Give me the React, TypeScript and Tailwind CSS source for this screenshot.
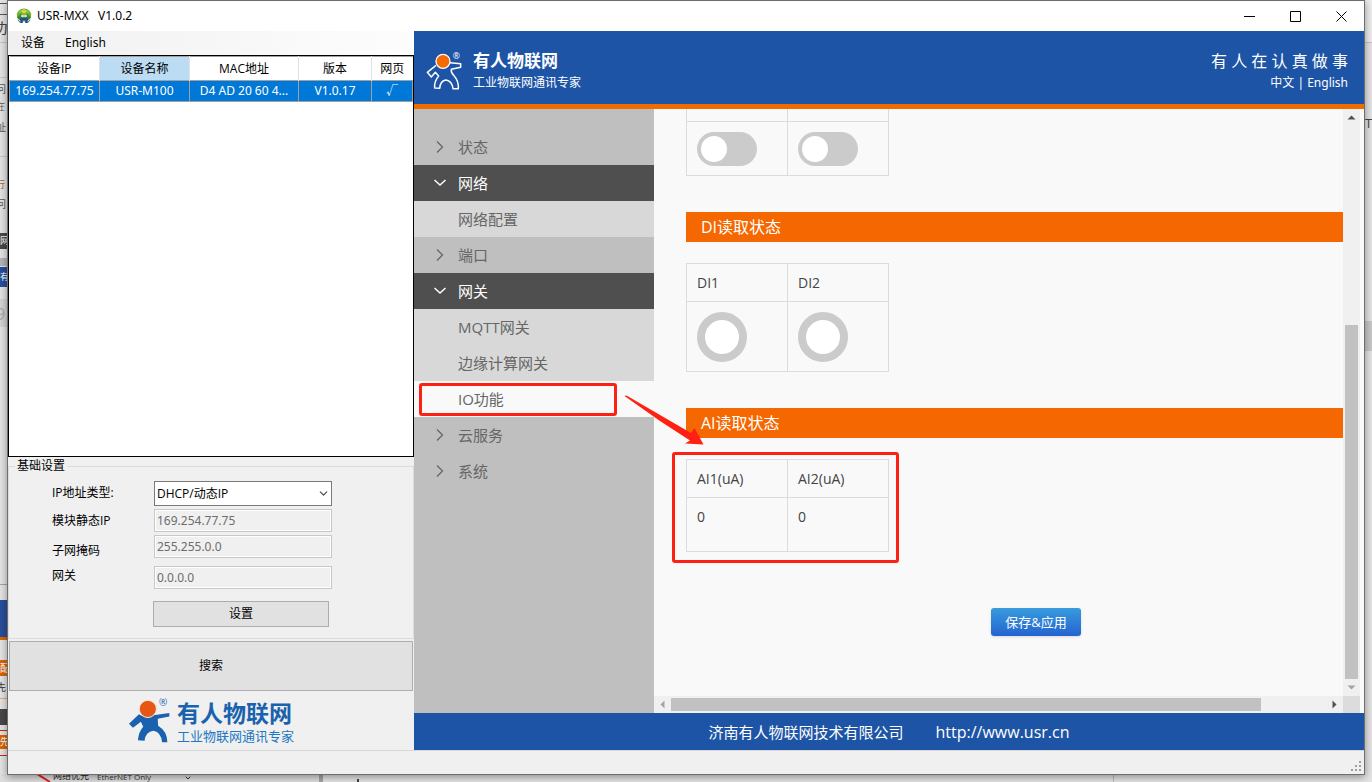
import React from "react";
import { ChevronDown } from "lucide-react";

const stripTexts = [
  { text: "办", cls: "top-[18px] text-[14px] text-[#444]" },
  { text: "问", cls: "top-[79px] text-[10px] text-[#555]" },
  { text: "在", cls: "top-[97px] text-[9px] text-[#555]" },
  { text: "址", cls: "top-[117px] text-[10px] text-[#555]" },
  { text: "行", cls: "top-[175px] text-[9px] text-[#a06a30]" },
  { text: "问", cls: "top-[194px] text-[10px] text-[#555]" },
  { text: "9", cls: "top-[304px] text-[16px] text-[#aaa]" },
  { text: "先", cls: "top-[677px] text-[10px] text-[#333]" },
];

function Backdrop() {
  return (
    <div aria-hidden="true" className="absolute inset-0 overflow-hidden bg-[#e4e4e4] select-none">
      <div className="absolute top-0 left-0 h-full w-2 overflow-hidden">
        <div className="absolute top-[3px] h-px w-full bg-[#55555f]" />
        <div className="absolute top-[14px] h-px w-full bg-[#55555f]" />
        <div className="absolute top-[42px] h-px w-full bg-[#c4c4c4]" />
        <div className="absolute top-[77px] h-px w-full bg-[#c9c9c9]" />
        <div className="absolute top-[156px] h-px w-full bg-[#c9c9c9]" />
        <div className="absolute top-[233px] h-4 w-full overflow-hidden bg-[#484848] text-[9px] leading-4 text-white">网</div>
        <div className="absolute top-[258px] h-2 w-full bg-[#b5b5b5]" />
        <div className="absolute top-[267px] h-5 w-full overflow-hidden bg-[#284f9b] text-[9px] leading-5 text-white">有</div>
        <div className="absolute top-[299px] h-7 w-full bg-[#d4d4d4]" />
        <div className="absolute top-[584px] h-px w-full bg-[#a5a5a5]" />
        <div className="absolute top-[600px] h-[37px] w-full bg-[#284f9b]" />
        <div className="absolute top-[637px] h-[3px] w-full bg-[#dc6500]" />
        <div className="absolute top-[660px] h-4 w-full overflow-hidden bg-[#dc6500] text-[10px] leading-4 text-white">配</div>
        <div className="absolute top-[698px] h-px w-full bg-[#e5a878]" />
        <div className="absolute top-[709px] h-4 w-full bg-[#484848]" />
        <div className="absolute top-[730px] h-px w-full bg-[#dc2018]" />
        <div className="absolute top-[735px] h-[14px] w-full overflow-hidden bg-[#dc6500] text-[9px] leading-[14px] text-white">先</div>
        <div className="absolute top-[755px] h-px w-full bg-[#dc2018]" />
        {stripTexts.map((t, i) => (
          <span key={i} className={`absolute -left-1 leading-5 ${t.cls}`}>{t.text}</span>
        ))}
      </div>
      <div className="absolute top-0 right-0 h-full w-2 overflow-hidden">
        <div className="absolute top-0 h-[42px] w-full bg-[#ededed]" />
        <div className="absolute top-[42px] h-px w-full bg-[#c4c4c4]" />
        <span className="absolute top-[113px] left-[1px] text-[13px] leading-5 text-[#444]">T</span>
        <div className="absolute top-[321px] h-[30px] w-full bg-[#c8c8c8]" />
      </div>
      <div className="absolute bottom-0 left-0 h-2 w-full overflow-hidden">
        <div className="absolute left-0 h-full w-[319px] bg-[#dedede]" />
        <svg className="absolute top-0 left-[36px] h-2 w-5" viewBox="0 0 20 8">
          <path d="M1 0L14 8" stroke="#dc2018" strokeWidth="2" />
        </svg>
        <span className="absolute -top-1 left-[53px] text-[9px] leading-3 text-[#222]">网络优先</span>
        <span className="absolute -top-[3px] left-[97px] text-[8px] leading-3 text-[#333]">EtherNET Only</span>
        <ChevronDown className="absolute top-0 left-[184px] size-2 text-[#333]" strokeWidth={3} />
        <div className="absolute left-[319px] h-full w-1 bg-[#a5a5a5]" />
        <div className="absolute top-[5px] left-[357px] h-[3px] w-[2px] bg-[#444]" />
        <div className="absolute left-[1113px] h-full w-px bg-[#bbb]" />
      </div>
    </div>
  );
}

function AppIcon() {
  return (
    <svg className="size-4" viewBox="0 0 16 16" aria-hidden="true">
      <ellipse cx="8" cy="7" rx="7.2" ry="6.4" fill="#6fb52c" />
      <path d="M2 5Q8-2 14 5L11 4Q8 1 5 4Z" fill="#a6d34c" />
      <circle cx="8" cy="3.8" r="2.2" fill="#d9d63c" />
      <path d="M.8 9.500L4 6.200Q8 4.600 12 6.200L15.200 9.500L13 11.500H3Z" fill="#3f8a2d" />
      <rect x="5" y="6.600" width="6" height="3" rx="1" fill="#c9dfa8" />
      <path d="M4.200 9.600H11.800V15H9.200V12.500H6.800V15H4.200Z" fill="#234f8c" />
      <path d="M2 11.500L4 14.500H5M14 11.500L12 14.500H11" stroke="#3c6e9c" fill="none" />
    </svg>
  );
}

function TitleBar() {
  const button = "flex h-[30px] w-[46px] items-center justify-center";
  return (
    <header className="flex h-[30px] shrink-0 items-center bg-white pl-2">
      <AppIcon />
      <h1 className="ml-[5px] flex-1 font-['Noto_Sans',sans-serif] text-[12px] leading-4 whitespace-pre">USR-MXX   V1.0.2</h1>
      <button className={button} aria-label="Minimize">
        <svg className="size-[11px]" viewBox="0 0 11 11"><path d="M0 5.5H11" stroke="#000" /></svg>
      </button>
      <button className={button} aria-label="Maximize">
        <svg className="size-[11px]" viewBox="0 0 11 11"><path d="M.5 .5H10.500V10.500H.5Z" stroke="#000" fill="none" /></svg>
      </button>
      <button className={button} aria-label="Close">
        <svg className="size-[11px]" viewBox="0 0 11 11"><path d="M.5 .5L10.500 10.500M10.500 .5L.5 10.500" stroke="#000" /></svg>
      </button>
    </header>
  );
}

function DeviceTable() {
  const th = "border-r border-[#e2e2e2] p-0 font-normal last:border-r-0";
  const td = "overflow-hidden border border-[#a0a0a0] px-px py-0 text-center whitespace-nowrap";
  return (
    <div className="min-h-0 flex-1 border border-black bg-white">
      <table className="w-full table-fixed border-collapse text-[12px] leading-4">
        <colgroup>
          <col className="w-[90px]" />
          <col className="w-[90px]" />
          <col className="w-[109px]" />
          <col className="w-[73px]" />
          <col />
        </colgroup>
        <thead>
          <tr className="h-6 border-t border-[#a0a0a0]">
            <th className={th}>设备IP</th>
            <th className={`${th} bg-[#bcdcf4]`}>设备名称</th>
            <th className={th}>MAC地址</th>
            <th className={th}>版本</th>
            <th className={th}>网页</th>
          </tr>
        </thead>
        <tbody>
          <tr className="h-[21px] bg-[#0078d7] font-['Noto_Sans','Noto_Sans_CJK_SC',sans-serif] text-white">
            <td className={td}>169.254.77.75</td>
            <td className={td}>USR-M100</td>
            <td className={td}>D4 AD 20 60 4...</td>
            <td className={td}>V1.0.17</td>
            <td className={td}>√</td>
          </tr>
        </tbody>
      </table>
    </div>
  );
}

function BasicSettings() {
  const input =
    "h-[23px] w-full border border-[#c8c8c8] bg-[#f0f0f0] px-[2px] font-['Noto_Sans',sans-serif] text-[12px] leading-4 text-[#6d6d6d] shadow-[inset_0_0_0_1px_#fff]";
  return (
    <fieldset className="shrink-0 border border-[#dcdcdc] text-[12px]">
      <legend className="ml-[6px] px-[2px] leading-[18px]">基础设置</legend>
      <div className="flex pt-[6px] pb-[11px] pl-[43px]">
        <div className="flex w-[102px] flex-col leading-6">
          <label htmlFor="ip-type">IP地址类型:</label>
          <label htmlFor="static-ip" className="mt-1">模块静态IP</label>
          <label htmlFor="mask" className="mt-[6px]">子网掩码</label>
          <label htmlFor="gateway" className="mt-px">网关</label>
        </div>
        <div className="flex w-[178px] flex-col">
          <div className="relative">
            <select id="ip-type" className="block h-[25px] w-full appearance-none border border-[#7a7a7a] bg-white px-[2px] text-[12px] leading-4">
              <option>DHCP/动态IP</option>
            </select>
            <ChevronDown className="pointer-events-none absolute top-[6px] right-[2px] size-[13px] text-[#444]" strokeWidth={2} />
          </div>
          <input id="static-ip" className={`${input} mt-[3px]`} defaultValue="169.254.77.75" disabled />
          <input id="mask" className={`${input} mt-[3px]`} defaultValue="255.255.0.0" disabled />
          <input id="gateway" className={`${input} mt-2`} defaultValue="0.0.0.0" disabled />
          <button className="mt-3 -ml-px h-[26px] w-[176px] border border-[#adadad] bg-[#e1e1e1] leading-4">设置</button>
        </div>
      </div>
    </fieldset>
  );
}

function BrandLogo() {
  return (
    <div className="flex h-[59px] shrink-0 items-center justify-center gap-[6px] pt-px">
      <svg className="h-[46px] w-[43px]" viewBox="385 205 130 137" aria-hidden="true">
        <path
          d="M418 253L388 282L400 294L424 276L431 291Q417 306 415 332L435 333Q438 306 462 303Q486 308 488 338L504 338Q504 305 476 288L475 267L510 260V249L462 256Q440 268 418 253Z"
          fill="#1a62ae"
        />
        <circle cx="445" cy="237" r="26" fill="#e95513" stroke="#f0f0f0" strokeWidth="3" />
        <text x="491" y="229" textAnchor="middle" fontSize="30" fill="#1a62ae">®</text>
      </svg>
      <div>
        <div className="text-[23px] leading-[30px] font-bold text-[#1a62ae]">有人物联网</div>
        <div className="text-[13px] leading-4 text-[#2277c4]">工业物联网通讯专家</div>
      </div>
    </div>
  );
}

function DevicePanel() {
  return (
    <section className="flex w-[406px] shrink-0 flex-col">
      <nav className="flex h-6 shrink-0 items-center bg-linear-to-r from-[#f0f0f0] to-[#fdfdfd] pl-[13px] font-['Noto_Sans','Noto_Sans_CJK_SC',sans-serif] text-[12px] leading-4">
        <button>设备</button>
        <button className="ml-5">English</button>
      </nav>
      <DeviceTable />
      <BasicSettings />
      <button className="mx-px mt-[2px] h-[50px] shrink-0 border border-[#adadad] bg-[#e1e1e1] text-[12px]">搜索</button>
      <BrandLogo />
    </section>
  );
}

function WebHeader() {
  return (
    <header className="flex h-[78px] shrink-0 items-center justify-between border-b-[5px] border-[#f06c00] bg-[#1d54a6] pr-4 pl-3 text-white">
      <div className="flex items-center gap-[11px] pt-[6px]">
        <svg className="h-[38px] w-9" viewBox="48 152 108 114" aria-hidden="true">
          <path
            d="M78 192L52 213L64 227L76 213L86 224Q72 240 74 260L89 261Q91 238 108 236Q126 239 129 262L145 262Q147 240 131 222Q122 212 124 204L152 198V187L120 184"
            fill="none"
            stroke="#fff"
            strokeWidth="4.500"
            strokeLinejoin="round"
          />
          <circle cx="99" cy="180" r="21" fill="#f66a00" stroke="#fff" strokeWidth="4" />
          <text x="139" y="174" textAnchor="middle" fontSize="26" fill="#fff">®</text>
        </svg>
        <div>
          <div className="text-[17px] leading-6 font-bold">有人物联网</div>
          <div className="text-[12px] leading-5">工业物联网通讯专家</div>
        </div>
      </div>
      <div className="pt-[6px] text-right font-['Noto_Sans','Noto_Sans_CJK_SC',sans-serif]">
        <div className="text-[16px] leading-6">有 人 在 认 真 做 事</div>
        <div className="text-[12px] leading-5">
          <a href="#zh">中文</a> | <a href="#en">English</a>
        </div>
      </div>
    </header>
  );
}

type NavItem = { label: string; kind: "closed" | "open" | "sub" | "active" };

const navItems: NavItem[] = [
  { label: "状态", kind: "closed" },
  { label: "网络", kind: "open" },
  { label: "网络配置", kind: "sub" },
  { label: "端口", kind: "closed" },
  { label: "网关", kind: "open" },
  { label: "MQTT网关", kind: "sub" },
  { label: "边缘计算网关", kind: "sub" },
  { label: "IO功能", kind: "active" },
  { label: "云服务", kind: "closed" },
  { label: "系统", kind: "closed" },
];

const navStyles = {
  closed: "text-[#666]",
  open: "bg-[#4f4f4f] text-white",
  sub: "bg-[#d8d8d8] text-[#666]",
  active: "bg-[#f9f9f9] text-[#666]",
};

function Sidebar() {
  return (
    <nav className="w-60 shrink-0 bg-[#bfbfbf] pt-5 text-[15px] leading-9">
      {navItems.map((item) => (
        <a key={item.label} href="#nav" className={`flex h-9 items-center pl-5 ${navStyles[item.kind]}`}>
          <span className="flex w-6 items-center">
            {item.kind === "closed" && (
              <svg className="h-3 w-[13px]" viewBox="0 0 13 12"><path d="M3 .5L8.500 6L3 11.500" stroke="currentColor" strokeWidth="1.300" fill="none" /></svg>
            )}
            {item.kind === "open" && (
              <svg className="h-3 w-[13px]" viewBox="0 0 13 12"><path d="M.5 3L6 8L11.500 3" stroke="currentColor" strokeWidth="1.500" fill="none" /></svg>
            )}
          </span>
          {item.label}
        </a>
      ))}
    </nav>
  );
}

const tableCls = "w-[203px] table-fixed border-collapse text-left text-[14px] leading-5 text-[#444]";
const headCls = "border border-[#dcdcdc] px-[10px] pt-[2px] pb-0 font-normal";
const cellCls = "border border-[#dcdcdc] px-[10px] py-0 align-top";

function SectionTitle({ children }: { children: React.ReactNode }) {
  return <h2 className="mt-9 mb-[21px] h-[30px] bg-[#f56700] pl-[15px] text-[16px] leading-[30px] text-white">{children}</h2>;
}

function IoContent() {
  return (
    <main className="min-h-0 flex-1 overflow-hidden pl-8">
      <div className="w-full min-w-[700px]">
        <table className={tableCls}>
          <tbody>
            <tr className="h-3">
              <td className="border-x border-[#dcdcdc] p-0" />
              <td className="border-x border-[#dcdcdc] p-0" />
            </tr>
            <tr className="h-[54px]">
              {["DO1", "DO2"].map((name) => (
                <td key={name} className={cellCls}>
                  <input
                    type="checkbox"
                    role="switch"
                    aria-label={name}
                    className="mt-[10px] block h-[34px] w-[60px] appearance-none rounded-full bg-[#cbcbcb] p-1 before:block before:size-[26px] before:rounded-full before:bg-white"
                  />
                </td>
              ))}
            </tr>
          </tbody>
        </table>

        <SectionTitle>DI读取状态</SectionTitle>
        <table className={tableCls}>
          <thead>
            <tr className="h-[38px]">
              <th className={headCls}>DI1</th>
              <th className={headCls}>DI2</th>
            </tr>
          </thead>
          <tbody>
            <tr className="h-[70px]">
              {["DI1", "DI2"].map((name) => (
                <td key={name} className={cellCls}>
                  <div className="mt-[10px] size-[50px] rounded-full border-8 border-[#cbcbcb] bg-white" />
                </td>
              ))}
            </tr>
          </tbody>
        </table>

        <SectionTitle>AI读取状态</SectionTitle>
        <table className={tableCls}>
          <thead>
            <tr className="h-[38px]">
              <th className={headCls}>AI1(uA)</th>
              <th className={headCls}>AI2(uA)</th>
            </tr>
          </thead>
          <tbody>
            <tr className="h-[54px]">
              <td className={cellCls}><div className="pt-[9px]">0</div></td>
              <td className={cellCls}><div className="pt-[9px]">0</div></td>
            </tr>
          </tbody>
        </table>

        <div className="mt-14 flex justify-center">
          <button className="h-7 w-[90px] rounded-[3px] bg-linear-to-b from-[#3a9bdd] to-[#2563d0] text-[13px] leading-5 text-white shadow-sm">
            保存&amp;应用
          </button>
        </div>
      </div>
    </main>
  );
}

function Arrow({ d, faded }: { d: string; faded?: boolean }) {
  return (
    <span className="flex size-[17px] shrink-0 items-center justify-center">
      <svg className="size-[9px]" viewBox="0 0 9 9"><path d={d} fill={faded ? "#a3a3a3" : "#505050"} /></svg>
    </span>
  );
}

function WebBody() {
  return (
    <div className="relative flex min-h-0 flex-1 bg-[#f9f9f9]">
      <Sidebar />
      <div className="flex min-w-0 flex-1 flex-col">
        <IoContent />
        <div className="flex h-[17px] shrink-0 items-center bg-[#f0f0f0]">
          <Arrow d="M6.500 .5V8.500L2.500 4.500Z" faded />
          <div className="flex-1">
            <div className="h-[13px] w-[90%] bg-[#c1c1c1]" />
          </div>
          <Arrow d="M2.500 .5V8.500L6.500 4.500Z" />
        </div>
      </div>
      <div className="flex w-[17px] shrink-0 flex-col items-center bg-[#f0f0f0]">
        <Arrow d="M.5 6.500H8.500L4.500 2.500Z" />
        <div className="flex w-full flex-1 flex-col items-center justify-end">
          <div className="h-[64%] w-[13px] bg-[#c1c1c1]" />
        </div>
        <Arrow d="M.5 2.500H8.500L4.500 6.500Z" faded />
        <div className="size-[17px] bg-[#dcdcdc]" />
      </div>
      <div className="w-1 shrink-0 bg-[#fafafa]" />

      <div className="pointer-events-none absolute top-[274px] left-[5px] h-[33px] w-[198px] rounded-[3px] border-[3px] border-[#ff2014]" />
      <div className="pointer-events-none absolute top-[343px] left-[258px] h-[111px] w-[227px] rounded-[3px] border-[3px] border-[#ff2014]" />
      <svg className="pointer-events-none absolute top-[284px] left-[208px] h-[54px] w-[84px]" viewBox="622 393 84 54" aria-hidden="true">
        <path d="M624.500 396L626.500 395.500L691 433L694.500 428L703.500 444.500L685 443.500L690 440.500L660 421Z" fill="#ff2014" />
      </svg>
    </div>
  );
}

function WebPanel() {
  return (
    <section className="flex min-w-0 flex-1 flex-col">
      <WebHeader />
      <WebBody />
      <footer className="flex h-[37px] shrink-0 items-center justify-center gap-8 bg-[#1d54a6] text-[15px] leading-5 text-white">
        <span>济南有人物联网技术有限公司</span>
        <a href="http://www.usr.cn" className="text-[16px]">http://www.usr.cn</a>
      </footer>
    </section>
  );
}

export default function App() {
  return (
    <div className="relative h-screen min-h-[600px] overflow-hidden px-[7px] pb-[7px] font-['Open_Sans','Noto_Sans_CJK_SC',sans-serif] text-black">
      <Backdrop />
      <div className="relative flex h-full flex-col border border-[#6e6e6e] bg-[#f0f0f0] shadow-[0_2px_8px_rgba(0,0,0,0.4)]">
        <TitleBar />
        <div className="flex min-h-0 flex-1">
          <DevicePanel />
          <WebPanel />
        </div>
        <div className="flex h-6 shrink-0 items-end justify-end border-t border-[#d7d7d7] p-[2px]">
          <svg className="size-[11px]" viewBox="0 0 11 11" aria-hidden="true">
            <path d="M8 0h2v2h-2zM4 4h2v2h-2zM8 4h2v2h-2zM0 8h2v2h-2zM4 8h2v2h-2zM8 8h2v2h-2z" fill="#a0a0a0" />
          </svg>
        </div>
      </div>
    </div>
  );
}
